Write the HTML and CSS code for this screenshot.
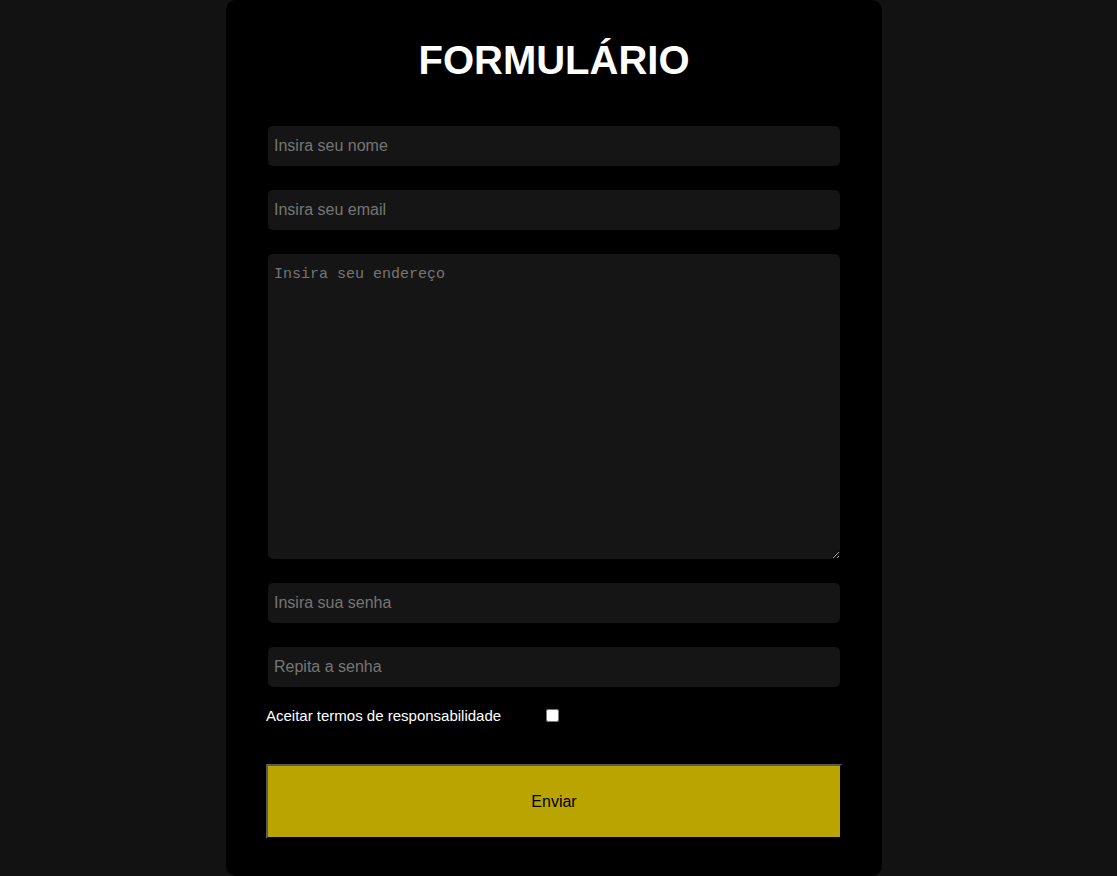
FILE: index.html
```html
<!DOCTYPE html>
<html lang="pt-BR">
<head>
<meta charset="utf-8">
<title>Formulário</title>
<link rel="stylesheet" href="styles.css">
</head>
<body>
<div class="page">
  <main class="card">
    <h1 class="title">FORMULÁRIO</h1>
    <form class="form">
      <div class="fields">
        <input class="field" type="text" placeholder="Insira seu nome">
        <input class="field" type="email" placeholder="Insira seu email">
        <textarea class="field area" placeholder="Insira seu endereço"></textarea>
        <input class="field" type="password" placeholder="Insira sua senha">
        <input class="field" type="password" placeholder="Repita a senha">
      </div>
      <div class="terms">
        <label class="terms-label" for="aceite">Aceitar termos de responsabilidade</label>
        <input class="check" id="aceite" type="checkbox">
      </div>
      <button class="submit" type="button">Enviar</button>
    </form>
  </main>
</div>
</body>
</html>
```
FILE: styles.css
```css
html, body {
  margin: 0;
  padding: 0;
  background: #121212;
  font-family: "Liberation Sans", Arial, sans-serif;
}

.page {
  display: flex;
  justify-content: center;
  padding-right: 9px;
}

.card {
  box-sizing: border-box;
  width: 656px;
  height: 876px;
  background: #000;
  border-radius: 10px;
  padding: 0 40px;
}

.title {
  margin: 37px 0 43px;
  font-size: 40px;
  line-height: 46px;
  font-weight: bold;
  color: #fff;
  text-align: center;
}

.form {
  display: flex;
  flex-direction: column;
}

.fields {
  display: flex;
  flex-direction: column;
  gap: 24px;
}

.field {
  box-sizing: border-box;
  display: block;
  margin: 0 2px;
  width: calc(100% - 4px);
  height: 40px;
  padding: 0 6px;
  border: none;
  outline: none;
  border-radius: 5px;
  background: #151515;
  color: #ddd;
  font-family: "Liberation Sans", Arial, sans-serif;
  font-size: 16px;
}

.field::placeholder {
  color: #757575;
}

.area {
  height: 305px;
  padding: 12px 6px;
  font-family: "Liberation Mono", "DejaVu Sans Mono", monospace;
  font-size: 15px;
  resize: both;
  color-scheme: dark;
}

.terms {
  display: flex;
  align-items: center;
  margin-top: 20px;
  height: 17px;
}

.terms-label {
  color: #fff;
  font-size: 15px;
  line-height: 17px;
}

.check {
  width: 13px;
  height: 13px;
  margin: 0 0 0 45px;
}

.submit {
  box-sizing: border-box;
  margin-top: 40px;
  width: 100%;
  height: 75px;
  border-style: solid;
  border-width: 2px;
  border-color: #5a5a5a #000 #000 #5a5a5a;
  background: #baa500;
  color: #000;
  font-family: "Liberation Sans", Arial, sans-serif;
  font-size: 16px;
  padding: 0;
}
```
